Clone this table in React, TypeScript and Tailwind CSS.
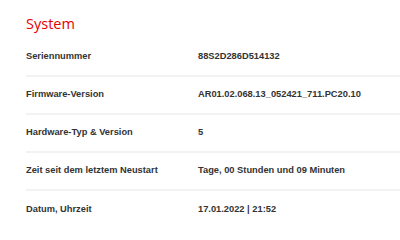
import React from 'react';

const rows: [string, string][] = [
  ['Seriennummer', '88S2D286D514132'],
  ['Firmware-Version', 'AR01.02.068.13_052421_711.PC20.10'],
  ['Hardware-Typ & Version', '5'],
  ['Zeit seit dem letztem Neustart', 'Tage, 00 Stunden und 09 Minuten'],
  ['Datum, Uhrzeit', '17.01.2022 | 21:52'],
];

export default function App() {
  return (
    <div className="w-[400px] h-[240px] bg-white overflow-hidden pl-[26px]">
      <h1 className="h-[39px] pt-[14px] text-[14.5px] leading-[20px] text-[#e60000] font-['Open_Sans',sans-serif]">
        System
      </h1>
      <div className="font-['Liberation_Sans',Arial,sans-serif] text-[9.3px] font-bold text-[#333333]">
        {rows.map(([label, value], i) => (
          <div
            key={label}
            className={`flex items-center h-[38px] ${i < rows.length - 1 ? 'border-b-2 border-[#f2f2f2]' : ''}`}
          >
            <div className="w-[172px] shrink-0">{label}</div>
            <div>{value}</div>
          </div>
        ))}
      </div>
    </div>
  );
}
